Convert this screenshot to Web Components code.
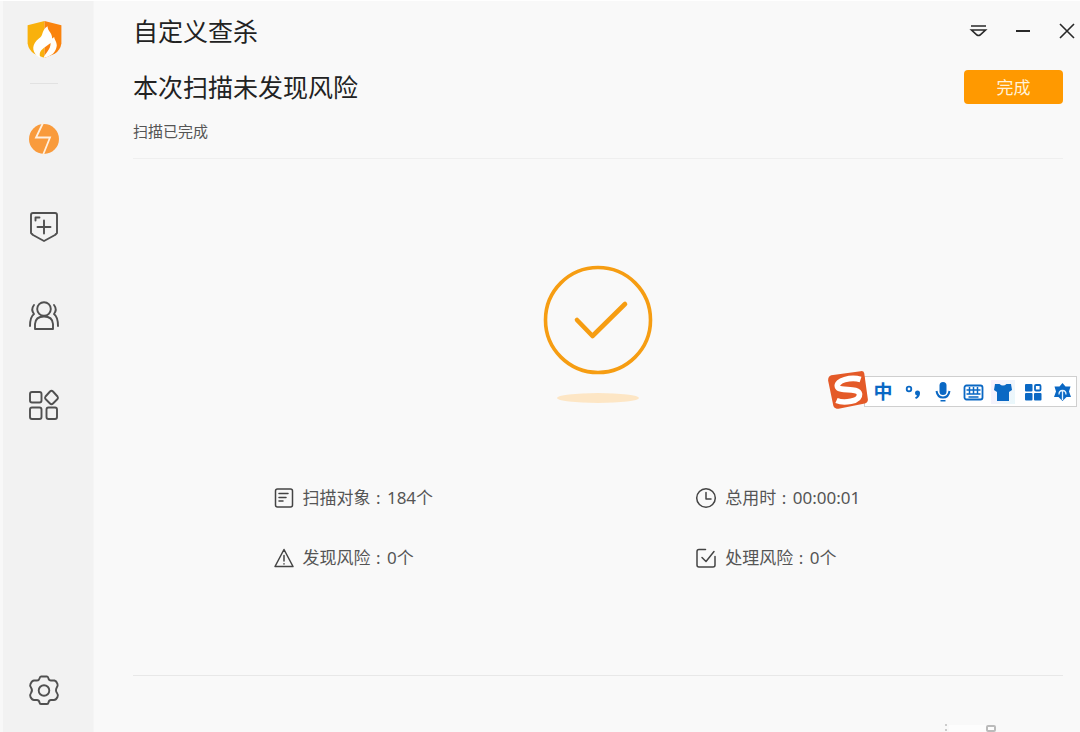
<!DOCTYPE html>
<html lang="zh-CN">
<head>
<meta charset="utf-8">
<title>自定义查杀</title>
<style>
body { margin: 0; background: #f9f9f9; color: #222; font-family: "Noto Sans", "Noto Sans CJK SC", sans-serif; }
</style>
</head>
<body>
<scan-app></scan-app>
<script>
const define = (name, html, setup) => customElements.define(name, class extends HTMLElement {
  constructor() {
    super();
    const t = document.createElement('template');
    t.innerHTML = html;
    this.attachShadow({ mode: 'open' }).append(t.content.cloneNode(true));
  }
  connectedCallback() { if (setup) setup(this); }
});

define('side-nav', `
<style>
:host { display: flex; flex-direction: column; align-items: center; box-sizing: border-box; padding: 17px 8px 20px 0; background: #f2f2f2; border-left: 3px solid #f8f8f8; border-right: 1px solid #f5f5f5; }
.logo { width: 43px; height: 43px; }
hr { width: 28px; height: 1px; margin: 22px 0 33px; border: 0; background: #e2e2e2; }
nav { display: flex; flex-direction: column; gap: 45px; flex: 1; }
button { display: block; width: 44px; height: 44px; padding: 0; border: 0; background: none; }
svg { display: block; width: 100%; height: 100%; fill: none; stroke: #505050; stroke-width: 1.9; stroke-linecap: round; stroke-linejoin: round; }
</style>
<div class="logo"><svg viewBox="0 0 42 42" role="img" aria-label="火绒"><g stroke="none">
<path d="M21 3L4.500 7V25Q5.500 31.500 11 35L21 39Z" fill="#f9b10c"/><path d="M21 3L37.500 7V25Q36.500 31.500 31 35L21 39Z" fill="#fa830d"/>
<path d="M24 8C17.500 12 20.500 17 15.500 20C9 25 8 32 14 37L17 39C15 33 18 31 22 28L27 24.500C27 31 22 34 20 39C29 37 32 33 33 27C33 23 30.500 21 30.500 18.500L28.500 20C28.500 14 24 13 24 8Z" fill="#fffefb"/></g></svg></div>
<hr>
<nav aria-label="主导航">
<button aria-label="病毒查杀"><svg viewBox="0 0 44 44"><circle cx="22" cy="22" r="15" fill="#f99b3c" stroke="none"/><path d="M21 6L14 20.500H28L21 38" stroke="#fff0df" stroke-width="1.800" stroke-linejoin="miter"/></svg></button>
<button aria-label="防护中心"><svg viewBox="0 0 44 44"><path d="M11 7H33Q35 7 35 9V27L33 29L22 35L11 29L9 27V9Q9 7 11 7ZM15.500 21H28.500M22 14.500V27.500"/><path d="M13.500 14.500V11.500H17.500"/></svg></button>
<button aria-label="访问控制"><svg viewBox="0 0 44 44"><circle cx="22" cy="14" r="6.800"/><path d="M13 34V29Q13.500 21.500 22 21.500T31 29V34ZM12 10Q8.500 14.500 12 19Q8 22 8 31M32 10Q35.500 14.500 32 19Q36 22 36 31"/></svg></button>
<button aria-label="安全工具"><svg viewBox="0 0 44 44"><rect x="8" y="8" width="11.500" height="10.500" rx="2"/><rect x="8" y="23.500" width="11.500" height="11.500" rx="2"/><rect x="24.500" y="23.500" width="10.500" height="11.500" rx="2"/><path d="M28 7.500Q29.500 6 31 7.500L35.500 12.500Q36.500 14 35.500 15L31 19.500Q29.500 21 28 19.500L23.500 15Q22.500 14 23.500 12.500Z"/></svg></button>
</nav>
<button aria-label="设置"><svg viewBox="0 0 44 44"><circle cx="22" cy="22.500" r="5.300"/><path d="M19 8.500H25Q26 8.500 26.500 10.500Q27 12.500 29 12.500H32.500Q34.500 13 35.500 16Q36 18 35 19Q33 22.500 35 25Q36.500 27 35.500 29Q34 32 32 32H29Q27 32 26.500 34.500Q26.300 36 25 36H19Q17.700 36 17.500 34.500Q17 32 15 32H12Q10 32 8.500 29Q7.500 27 9 25Q11 22.500 9 19.500Q7.500 18 8.500 16Q10 12.500 12 12.500H15Q17 12.500 17.500 10.500Q18 8.500 19 8.500Z"/></svg></button>`);

define('title-bar', `
<style>
:host { display: flex; align-items: center; justify-content: space-between; height: 60px; }
h1 { margin: 0; font-size: 25px; line-height: 32px; font-weight: 400; }
div { display: flex; gap: 20px; }
button { width: 24px; height: 24px; padding: 0; border: 0; background: none; }
svg { display: block; width: 24px; height: 24px; fill: none; stroke: #292929; stroke-width: 1.6; }
</style>
<h1><slot></slot></h1>
<div>
<button aria-label="菜单"><svg viewBox="0 0 24 24"><path d="M4 7H19M4.500 11H18.500L13 16Q11.500 17 10 16Z"/></svg></button>
<button aria-label="最小化"><svg viewBox="0 0 24 24"><path d="M5 12H19" stroke-width="2"/></svg></button>
<button aria-label="关闭"><svg viewBox="0 0 24 24"><path d="M5 5L19 19M19 5L5 19"/></svg></button>
</div>`);

define('result-header', `
<style>
:host { display: flex; align-items: flex-start; justify-content: space-between; padding: 8px 0 12px; border-bottom: 1px solid #efefef; }
h2 { margin: 0 0 12px; font-size: 25px; line-height: 36px; font-weight: 400; }
p { margin: 0; font-size: 15px; line-height: 29px; color: #555; }
button { width: 99px; height: 34px; margin-top: 1px; padding: 0; border: 0; border-radius: 4px; background: #ff9900; color: #fff2d8; font: inherit; font-size: 17px; line-height: 36px; }
</style>
<div><h2><slot></slot></h2><p><slot name="note"></slot></p></div>
<button>完成</button>`);

define('success-mark', `
<style>
:host { display: block; }
svg { display: block; width: 110px; height: 140px; margin: 0 auto; }
</style>
<svg viewBox="0 0 110 140" fill="none" role="img" aria-label="安全"><circle cx="55" cy="55" r="52.500" stroke="#f69d12" stroke-width="3.600"/><path d="M34 55L49.500 71L82 39" stroke="#f69d12" stroke-width="4.600" stroke-linecap="round" stroke-linejoin="round"/><ellipse cx="55" cy="133" rx="41" ry="5" fill="#fde6c5"/></svg>`);

const statIcons = {
  list: '<rect x="2.500" y="2" width="17" height="18" rx="2"/><path d="M6 6.500H15M6 10.500H13M6 14H10"/>',
  clock: '<circle cx="11" cy="11" r="9.300"/><path d="M11 5.500V12H16"/>',
  risk: '<path d="M11 2.500L20 19.500H2ZM11 8.500V14M11 16.800V17"/>',
  done: '<path d="M10.500 2.500H4Q2 2.500 2 4.500V18Q2 20 4 20H18Q20 20 20 18V9.500M7 10.500L11 14.500L19 4.500"/>'
};
define('stat-item', `
<style>
:host { display: flex; align-items: center; gap: 8px; height: 24px; color: #555; font-size: 17px; line-height: 24px; white-space: nowrap; }
svg { flex: none; width: 22px; height: 22px; fill: none; stroke: #444; stroke-width: 1.5; stroke-linejoin: round; stroke-linecap: round; }
p { margin: 0; }
i { font-style: normal; margin: 0 2px 0 1px; }
</style>
<svg viewBox="0 0 22 22" aria-hidden="true"></svg><p><slot name="label"></slot><i> : </i><slot></slot></p>`,
  el => el.shadowRoot.querySelector('svg').innerHTML = statIcons[el.getAttribute('icon')]);

define('ime-bar', `
<style>
:host { display: flex; align-items: center; }
.logo { width: 44px; height: 44px; margin-right: -6px; position: relative; flex: none; }
.bar { display: flex; gap: 6px; align-items: center; box-sizing: border-box; height: 31px; margin-top: 3px; padding: 0 1px 0 6px; border: 1px solid #cfcfcf; background: #fff; }
button { width: 24px; height: 24px; padding: 0; border: 0; background: none; color: #0a68c4; font: inherit; font-weight: 700; font-size: 19px; line-height: 24px; }
svg { display: block; width: 100%; height: 100%; }
.bar svg { width: 24px; height: 24px; fill: #0a68c4; stroke: #0a68c4; stroke-width: 0; }
.tint { background: linear-gradient(120deg, #fbf0fd, #e9f8fb); }
</style>
<div class="logo"><svg viewBox="0 0 42 42" role="img" aria-label="搜狗输入法"><path d="M5 7L33 3Q36 2.500 36.500 5L40 30Q40 33 37 34L12 39Q8 39 7 36L2 12Q2 8 5 7Z" fill="#e45a28"/><path d="M33 11C24 8 9 12 11 18C13 23 31 18 32 25C32.500 32 17 34 10 31" fill="none" stroke="#fff" stroke-width="5.400"/></svg></div>
<div class="bar">
<button>中</button>
<button aria-label="标点"><svg viewBox="0 0 24 24"><circle cx="8" cy="9" r="2.300" fill="none" stroke-width="1.800"/><path d="M14 13A2.500 2.500 0 1 1 19 13Q19 17 15 19L14 17.500Q16 16.500 16 15.500Q14 15 14 13Z"/></svg></button>
<button aria-label="语音"><svg viewBox="0 0 24 24"><rect x="8.500" y="2" width="7" height="13" rx="3.500"/><path d="M5.500 11Q6.500 17.500 12 17.500T18.500 11" fill="none" stroke-width="2"/><path d="M9.500 20H14.500V21.500H9.500Z"/></svg></button>
<button aria-label="键盘"><svg viewBox="0 0 24 24"><rect x="3.500" y="5.500" width="18" height="14" rx="2" fill="none" stroke-width="1.800"/><path d="M5.500 10H19.500M5.500 14H19.500M8.500 7V14M12.500 7V14M16.500 7V14M7.500 17H17.500" stroke-width="1.500" fill="none"/></svg></button>
<button class="tint" aria-label="皮肤"><svg viewBox="0 0 24 24"><path d="M4 4H8.500Q12 7 15.500 4H20L21 10L18 12V21H6V12L3 10Z"/></svg></button>
<button aria-label="工具箱"><svg viewBox="0 0 24 24"><rect x="4" y="4" width="7.500" height="7.500" rx="1"/><rect x="4" y="13" width="7.500" height="7.500" rx="1"/><rect x="13" y="13" width="7.500" height="7.500" rx="1"/><rect x="14" y="5" width="5.500" height="5.500" rx="1" fill="none" stroke-width="1.800"/></svg></button>
<button aria-label="智能助手"><svg viewBox="0 0 24 24"><path d="M11.500 3L14.500 6.500H19.500L18 11.500L20 17H15.500L11.500 21L7.500 17H3L5 11.500L3.500 6.500H8.500Z"/><path d="M11.500 5.500L17 11V14H14V11.500H9V14H6V11Z"/><path d="M8 14.500Q8 10.500 11.500 10.500T15 14.500M11.500 11V20" fill="none" stroke="#e2f2ff" stroke-width="1.300"/></svg></button>
</div>`);

define('scan-app', `
<style>
:host { display: grid; grid-template-columns: 94px minmax(0, 1fr); min-height: 100vh; position: relative; box-sizing: border-box; border-top: 1px solid #fff; }
main { display: flex; flex-direction: column; padding-left: 39px; }
title-bar { margin-right: 1px; }
result-header, section { margin-right: 17px; }
section { flex: 1; }
success-mark { margin: 106px 0 81px; }
.stats { display: grid; grid-template-columns: 23fr 20fr; row-gap: 36px; padding-left: 15%; }
footer { display: flex; justify-content: flex-end; align-items: flex-end; height: 56px; margin-right: 17px; border-top: 1px solid #e8e8e8; }
footer svg { width: 60px; height: 10px; margin-right: 60px; }
ime-bar { position: absolute; right: 3px; top: 367px; }
</style>
<side-nav></side-nav>
<main>
<title-bar>自定义查杀</title-bar>
<result-header>本次扫描未发现风险<span slot="note">扫描已完成</span></result-header>
<section>
<success-mark></success-mark>
<div class="stats">
<stat-item icon="list"><span slot="label">扫描对象</span>184个</stat-item>
<stat-item icon="clock"><span slot="label">总用时</span>00:00:01</stat-item>
<stat-item icon="risk"><span slot="label">发现风险</span>0个</stat-item>
<stat-item icon="done"><span slot="label">处理风险</span>0个</stat-item>
</div>
</section>
<footer><svg viewBox="0 0 60 10" aria-hidden="true"><path d="M6 3H52V10H6Z" fill="#fdfdfd"/><path d="M2 2H4V4H2ZM2 7H4V9H2Z" fill="#ccc"/><rect x="44" y="4" width="8" height="5" rx="1" fill="none" stroke="#bbb" stroke-width="2"/></svg></footer>
</main>
<ime-bar></ime-bar>`);
</script>
</body>
</html>
